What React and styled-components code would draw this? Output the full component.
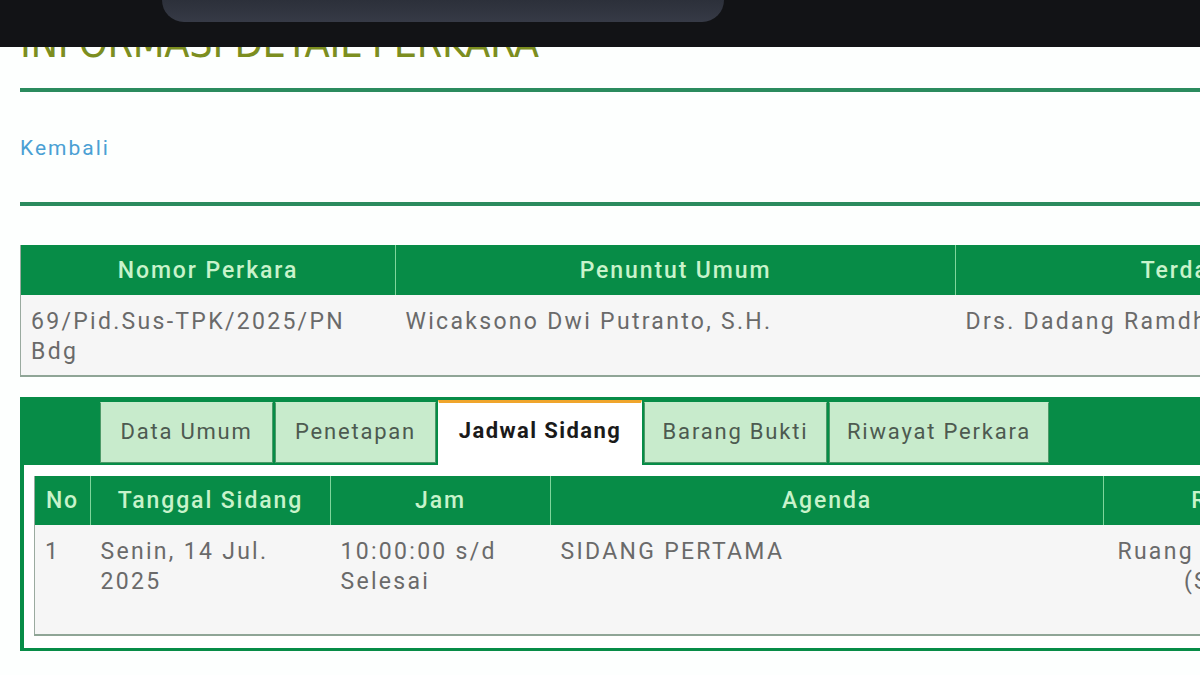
import React from "react";
import styled, { createGlobalStyle } from "styled-components";

const Global = createGlobalStyle`
  body {
    margin: 0;
    background: #ffffff;
    overflow: hidden;
    font-family: Roboto, "Noto Sans", sans-serif;
  }
`;

const Screen = styled.div`
  width: 1200px;
  height: 675px;
  overflow: hidden;
  background: #fdfffe;
`;

const StatusBar = styled.div`
  height: 47px;
  background: #121316;
  display: flex;
`;

const Notch = styled.div`
  margin-left: 162px;
  width: 562px;
  height: 22px;
  background: linear-gradient(#2c303a, #363a46);
  border-radius: 0 0 26px 26px;
`;

const Page = styled.div`
  width: 1500px;
  padding-left: 20px;
`;

const TitleClip = styled.div`
  height: 16px;
  overflow: hidden;
`;

const Title = styled.h1`
  margin: -24px 0 0;
  font-family: "Liberation Sans Narrow", "DejaVu Sans Condensed", sans-serif;
  font-weight: 400;
  font-size: 41px;
  line-height: 41px;
  color: #7c8e20;
  letter-spacing: -0.3px;
`;

const Rule = styled.div`
  height: 4px;
  background: #2b8b5e;
  margin-top: ${p => p.top}px;
`;

const BackLink = styled.a`
  display: block;
  margin-top: 42px;
  height: 28px;
  line-height: 28px;
  font-size: 21px;
  letter-spacing: 2px;
  color: #4aa0d4;
  text-decoration: none;
`;

const Table = styled.table`
  border-collapse: collapse;
  table-layout: fixed;
  width: ${p => p.width}px;
  margin-top: ${p => p.top || 0}px;
  background: #f6f6f6;
  border-left: 1px solid #9aaa9f;
  border-bottom: 2px solid #8fa596;
`;

const Head = styled.th`
  background: #078c47;
  color: #c8f3cb;
  font-weight: 500;
  font-size: 23px;
  letter-spacing: 1.9px;
  height: ${p => p.h}px;
  padding: 0 10px;
  text-align: center;
  border-left: 1px solid #7fd59b;
  white-space: nowrap;
  overflow: hidden;
  &:first-child { border-left: none; }
`;

const Cell = styled.td`
  vertical-align: top;
  color: #6a6a6a;
  font-size: 23px;
  letter-spacing: 2.3px;
  line-height: 30px;
  padding: ${p => p.pad || "12px 10px"};
  height: ${p => p.h}px;
  text-align: ${p => p.align || "left"};
  box-sizing: border-box;
`;

const Panel = styled.div`
  margin-top: 20px;
  width: 1400px;
  border: 4px solid #078c47;
  border-top: none;
  border-bottom-width: 3px;
  background: #ffffff;
`;

const TabBar = styled.div`
  height: 68px;
  background: #078c47;
  display: flex;
  align-items: flex-end;
  padding-left: 76px;
`;

const Tab = styled.div`
  height: ${p => (p.active ? 67 : 61)}px;
  box-sizing: border-box;
  display: flex;
  align-items: center;
  justify-content: center;
  padding: ${p => (p.active ? "0 0 9px" : "0 0 3px")};
  margin-right: 2px;
  font-size: 22px;
  letter-spacing: ${p => (p.active ? 1.4 : 1.8)}px;
  color: ${p => (p.active ? "#1a1a1a" : "#4d5a50")};
  font-weight: ${p => (p.active ? 700 : 400)};
  background: ${p => (p.active ? "#ffffff" : "#c8ebcc")};
  border: 1px solid ${p => (p.active ? "#ffffff" : "#4d9a68")};
  border-top: ${p => (p.active ? "3px solid #f0a52c" : "1px solid #c8ebcc")};
  margin-bottom: ${p => (p.active ? -2 : 2)}px;
  width: ${p => p.w}px;
  white-space: nowrap;
`;

const PanelBody = styled.div`
  padding: 11px 0 12px 10px;
`;

export default function App() {
  return (
    <Screen>
      <Global />
      <StatusBar>
        <Notch />
      </StatusBar>
      <Page>
        <TitleClip>
          <Title>INFORMASI DETAIL PERKARA</Title>
        </TitleClip>
        <Rule top={25} />
        <BackLink href="#">Kembali</BackLink>
        <Rule top={40} />

        <Table width={1420} top={39}>
          <colgroup>
            <col style={{ width: 375 }} />
            <col style={{ width: 560 }} />
            <col style={{ width: 485 }} />
          </colgroup>
          <thead>
            <tr>
              <Head h={50}>Nomor Perkara</Head>
              <Head h={50}>Penuntut Umum</Head>
              <Head h={50}>Terdakwa</Head>
            </tr>
          </thead>
          <tbody>
            <tr>
              <Cell h={80} pad="12px 10px 8px">69/Pid.Sus-TPK/2025/PN Bdg</Cell>
              <Cell h={80} pad="12px 10px 8px">Wicaksono Dwi Putranto, S.H.</Cell>
              <Cell h={80} pad="12px 10px 8px">Drs. Dadang Ramdhani, M.Si.</Cell>
            </tr>
          </tbody>
        </Table>

        <Panel>
          <TabBar>
            <Tab w={173}>Data Umum</Tab>
            <Tab w={161}>Penetapan</Tab>
            <Tab w={204} active>Jadwal Sidang</Tab>
            <Tab w={183}>Barang Bukti</Tab>
            <Tab w={220}>Riwayat Perkara</Tab>
          </TabBar>
          <PanelBody>
            <Table width={1319}>
              <colgroup>
                <col style={{ width: 56 }} />
                <col style={{ width: 240 }} />
                <col style={{ width: 220 }} />
                <col style={{ width: 553 }} />
                <col style={{ width: 250 }} />
              </colgroup>
              <thead>
                <tr>
                  <Head h={49}>No</Head>
                  <Head h={49}>Tanggal Sidang</Head>
                  <Head h={49}>Jam</Head>
                  <Head h={49}>Agenda</Head>
                  <Head h={49}>Ruang</Head>
                </tr>
              </thead>
              <tbody>
                <tr>
                  <Cell h={110}>1</Cell>
                  <Cell h={110}>Senin, 14 Jul. 2025</Cell>
                  <Cell h={110}>10:00:00 s/d Selesai</Cell>
                  <Cell h={110}>SIDANG PERTAMA</Cell>
                  <Cell h={110} align="center" pad="12px 30px 12px 10px">
                    Ruang Sidang VI (Sari)
                  </Cell>
                </tr>
              </tbody>
            </Table>
          </PanelBody>
        </Panel>
      </Page>
    </Screen>
  );
}
